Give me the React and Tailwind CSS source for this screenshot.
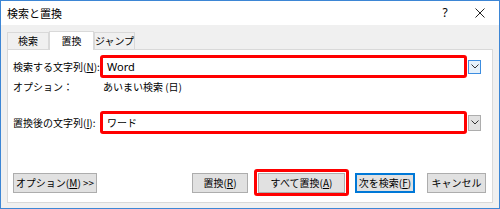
import React from 'react';

const jp = { fontFamily: '"Noto Sans CJK JP", "Noto Sans", sans-serif' };

function Chevron() {
    return (
        <svg width="8" height="5" viewBox="0 0 8 5">
            <path d="M0.5 0.5 L4 4 L7.5 0.5" fill="none" stroke="#333" strokeWidth="1" />
        </svg>
    );
}

function Tab({ label, active }) {
    if (active) {
        return (
            <div className="relative z-10 w-[45px] h-[19px] -mb-px bg-white border border-b-0 border-[#d9d9d9] flex items-center justify-center whitespace-nowrap">
                {label}
            </div>
        );
    }
    return (
        <div className="h-[17px] bg-[#f0f0f0] border border-b-0 border-[#d9d9d9] flex items-center justify-center whitespace-nowrap">
            {label}
        </div>
    );
}

function Btn({ children, w, blue }) {
    return (
        <div
            className={`h-[20px] ${w} shrink-0 whitespace-nowrap flex items-center justify-center bg-[#e1e1e1] ${blue ? 'border-2 border-[#0078d7]' : 'border border-[#adadad]'}`}
        >
            {children}
        </div>
    );
}

export default function App() {
    return (
        <div className="w-[500px] h-[209px] flex flex-col bg-[#f0f0f0] border border-[#3d86d5] text-[10px] text-black leading-none whitespace-nowrap" style={jp}>
            {/* Title bar */}
            <div className="h-[24px] bg-white flex items-center pl-[6px] shrink-0">
                <span className="text-[11px]">検索と置換</span>
                <div className="flex-1" />
                <span className="text-[12px] w-[20px] text-center" style={{ fontFamily: '"Noto Sans", sans-serif' }}>?</span>
                <span className="w-[20px]" />
                <svg width="10" height="10" viewBox="0 0 10 10" className="mr-[14px]">
                    <path d="M0.5 0.5 L9.5 9.5 M9.5 0.5 L0.5 9.5" stroke="#222" strokeWidth="1" />
                </svg>
            </div>

            {/* Tabs */}
            <div className="flex items-end pl-[6px] pt-[6px] shrink-0">
                <div className="w-[42px]"><Tab label="検索" /></div>
                <Tab label="置換" active />
                <div className="w-[41px]"><Tab label="ジャンプ" /></div>
            </div>

            {/* Panel */}
            <div className="mx-[6px] mb-[5px] flex-1 bg-white border border-[#d9d9d9] flex flex-col px-[5px] pt-[5px] pb-[6px]">
                <div className="flex items-center h-[23px]">
                    <span className="w-[87px] shrink-0">検索する文字列(<span className="underline">N</span>):</span>
                    <div className="flex-1 h-full border-[3px] border-[#f00] rounded-[3px] flex items-center pl-[4px]">
                        <span className="text-[11px]" style={{ fontFamily: '"Noto Sans", sans-serif' }}>Word</span>
                    </div>
                    <div className="ml-px shrink-0 w-[13px] h-[14px] border border-[#3c8de0] bg-[#e5f1fb] flex items-center justify-center">
                        <Chevron />
                    </div>
                    <div className="w-[6px] shrink-0" />
                </div>
                <div className="flex items-center h-[14px] mt-[2px]">
                    <span className="w-[90px] shrink-0">オプション：</span>
                    <span>あいまい検索 (日)</span>
                </div>
                <div className="flex items-center h-[23px] mt-[17px]">
                    <span className="w-[87px] shrink-0">置換後の文字列(<span className="underline">I</span>):</span>
                    <div className="flex-1 h-full border-[3px] border-[#f00] rounded-[3px] flex items-center pl-[4px]">
                        <span>ワード</span>
                    </div>
                    <div className="ml-px shrink-0 w-[13px] h-[16px] border border-[#adadad] bg-[#e1e1e1] flex items-center justify-center">
                        <Chevron />
                    </div>
                    <div className="w-[6px] shrink-0" />
                </div>
                <div className="flex-1" />
                <div className="flex items-center h-[27px]">
                    <Btn w="w-[84px]">オプション(<span className="underline">M</span>)&nbsp;&gt;&gt;</Btn>
                    <div className="flex-1" />
                    <Btn w="w-[56px]">置換(<span className="underline">R</span>)</Btn>
                    <div className="ml-[6px] shrink-0 w-[95px] h-[27px] border-[3px] border-[#f00] rounded-[3px] flex items-center justify-center">
                        <Btn w="w-[87px]">すべて置換(<span className="underline">A</span>)</Btn>
                    </div>
                    <div className="ml-[6px] shrink-0">
                        <Btn w="w-[60px]" blue>次を検索(<span className="underline">F</span>)</Btn>
                    </div>
                    <div className="ml-[12px] shrink-0">
                        <Btn w="w-[59px]">キャンセル</Btn>
                    </div>
                    <div className="w-[1px] shrink-0" />
                </div>
            </div>
        </div>
    );
}
